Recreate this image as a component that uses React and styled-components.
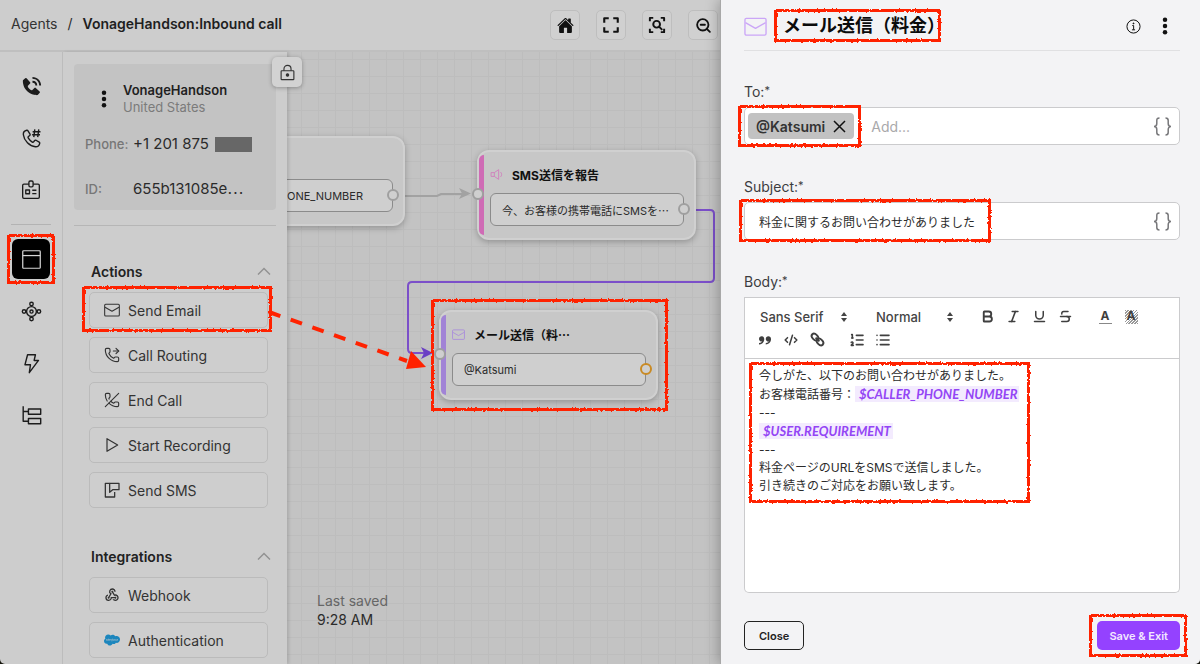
import React from "react";
import styled, { createGlobalStyle } from "styled-components";
import { Bold, CodeXml, Italic, List, ListOrdered, PhoneForwarded, PhoneOff, Strikethrough, Underline, ZoomOut } from "lucide-react";
import { BiSolidPhoneCall } from "react-icons/bi";
import { FaSalesforce } from "react-icons/fa";
import { ImQuotesRight } from "react-icons/im";
import { IoHome } from "react-icons/io5";
import { MdWebhook } from "react-icons/md";

const GlobalStyle = createGlobalStyle`
  * {
    box-sizing: border-box;
  }

  html {
    background: #15150c;
  }

  body {
    margin: 0;
    font-family: Inter, "Noto Sans CJK JP", sans-serif;
    font-size: 14px;
    color: #2b2b2b;
  }

  button, input, select {
    font: inherit;
    color: inherit;
  }
`;

// ----------------------------------------
// LAYOUT
// ----------------------------------------
const Page = styled.div`
  display: flex;
  height: 100vh;
  min-height: 560px;
  overflow: hidden;
  border-radius: 0 0 5px 5px;
  background: #cdcdcd;
`;

const Workspace = styled.div`
  position: relative;
  flex: 1;
  min-width: 0;
  display: flex;
  flex-direction: column;
`;

const TopBar = styled.header`
  display: flex;
  align-items: center;
  justify-content: space-between;
  height: 52px;
  flex-shrink: 0;
  padding: 0 2px 0 11px;
  border-bottom: 2px solid #bfbfbf;
`;

const Breadcrumb = styled.nav`
  display: flex;
  gap: 10px;
  padding-bottom: 4px;
  white-space: nowrap;

  a {
    color: #333;
    text-decoration: none;
  }

  strong {
    font-weight: 600;
    color: #1f1f1f;
  }
`;

const ToolGroup = styled.div`
  display: flex;
  gap: 16px;
`;

const ToolButton = styled.button`
  display: flex;
  align-items: center;
  justify-content: center;
  width: 30px;
  height: 30px;
  padding: 0;
  border: 1px solid #bebebe;
  border-radius: 5px;
  background: #d0d0d0;
  color: #111;
`;

const Main = styled.div`
  flex: 1;
  min-height: 0;
  display: flex;
`;

const Rail = styled.nav`
  display: flex;
  flex-direction: column;
  align-items: center;
  gap: 12px;
  width: 63px;
  flex-shrink: 0;
  padding-top: 14px;
  border-right: 1px solid #bdbdbd;
`;

const RailButton = styled.button`
  position: relative;
  display: flex;
  align-items: center;
  justify-content: center;
  width: 38px;
  height: 40px;
  padding: 0;
  border: 0;
  border-radius: 6px;
  background: ${({ $active }) => ($active ? "#000" : "transparent")};
  color: ${({ $active }) => ($active ? "#d6d6d6" : "#1c1c1c")};
`;

const RailDivider = styled.hr`
  width: 40px;
  margin: 2px 0;
  border: 0;
  border-top: 1px solid #b3b3b3;
`;

const SidePanel = styled.aside`
  position: relative;
  z-index: 2;
  width: 224px;
  flex-shrink: 0;
  padding: 12px 11px 0;
  background: #cdcdcd;
  box-shadow: 2px 0 3px rgba(0, 0, 0, 0.12);
`;

const LockButton = styled(ToolButton)`
  position: absolute;
  top: 5px;
  right: -15px;
  border: 0;
  background: #d2d2d2;
  box-shadow: 0 1px 4px rgba(0, 0, 0, 0.3);
  color: #333;
`;

// ----------------------------------------
// AGENT CARD
// ----------------------------------------
const AgentCard = styled.section`
  padding: 18px 11px 11px;
  border-radius: 4px;
  background: #c3c3c3;
`;

const AgentHead = styled.div`
  display: flex;
  align-items: center;
  gap: 16px;
  padding-left: 16px;
  margin-bottom: 18px;
  line-height: 17px;
`;

const AgentName = styled.div`
  font-size: 13px;
  font-weight: 600;
  color: #1f1f1f;
`;

const AgentCountry = styled.div`
  font-size: 13px;
  color: #7b7b7b;
`;

const MenuButton = styled.button`
  display: flex;
  padding: 0;
  border: 0;
  background: none;
  color: #111;
`;

const AgentFacts = styled.dl`
  display: grid;
  grid-template-columns: 44px 1fr;
  column-gap: 4px;
  row-gap: 25px;
  margin: 0;
  line-height: 20px;
  white-space: nowrap;

  dt {
    font-size: 13px;
    font-weight: 500;
    color: #777;
  }

  dd {
    display: flex;
    align-items: center;
    gap: 6px;
    margin: 0;
    font-size: 15px;
  }
`;

const Redacted = styled.span`
  width: 37px;
  height: 15px;
  background: #676767;
`;

const PanelDivider = styled.hr`
  margin: 15px 0 0;
  border: 0;
  border-top: 1px solid #b6b6b6;
`;

// ----------------------------------------
// ACTION LISTS
// ----------------------------------------
const Group = styled.section`
  padding: 0 8px 0 15px;
  margin-top: ${({ $gap }) => $gap}px;
`;

const GroupHeader = styled.div`
  display: flex;
  align-items: center;
  justify-content: space-between;
  height: 20px;
  margin: 0 -3px 11px 2px;

  h2 {
    margin: 0;
    font-size: 14px;
    font-weight: 600;
    color: #222;
  }
`;

const CollapseButton = styled(MenuButton)`
  color: #929292;
`;

const GroupItems = styled.div`
  display: flex;
  flex-direction: column;
  gap: 9px;
`;

const ActionButton = styled.button`
  position: relative;
  display: flex;
  align-items: center;
  gap: 8px;
  height: 36px;
  padding: 0 14px;
  border: 1px solid #bbb;
  border-radius: 5px;
  background: #cecece;
  color: #333;
  text-align: left;
`;

// ----------------------------------------
// CANVAS
// ----------------------------------------
const Canvas = styled.main`
  position: relative;
  flex: 1;
  min-width: 0;
  overflow: hidden;
  background-color: #c3c3c3;
  background-image: linear-gradient(#bdbdbd 1px, transparent 1px), linear-gradient(90deg, #bdbdbd 1px, transparent 1px);
  background-size: 17px 17px;
  background-position: 14px 7px;
`;

const Edges = styled.svg`
  position: absolute;
  inset: 0;
  overflow: visible;
`;

const Node = styled.article`
  position: absolute;
  left: ${({ $x }) => $x}px;
  top: ${({ $y }) => $y}px;
  display: flex;
  width: 219px;
  padding: 3px 0;
  border: 2px solid #d0d0d0;
  border-radius: 12px;
  background: #c7c7c7;
  box-shadow: 0 2px 6px rgba(0, 0, 0, 0.25);
`;

const NodeStripe = styled.div`
  width: 5px;
  border-radius: 8px 0 0 8px;
  background: ${({ $color }) => $color};
`;

const NodeContent = styled.div`
  flex: 1;
  min-width: 0;
  padding: 9px 10px 9px 6px;
`;

const NodeTitle = styled.h3`
  display: flex;
  align-items: center;
  gap: 9px;
  height: 20px;
  margin: 0 0 9px;
  font-size: 12px;
  font-weight: 700;
  color: #111;
  white-space: nowrap;
`;

const NodeField = styled.div`
  position: relative;
  display: flex;
  align-items: center;
  justify-content: ${({ $end }) => ($end ? "flex-end" : "flex-start")};
  height: 33px;
  padding: 0 ${({ $end }) => ($end ? 29 : 11)}px;
  border: 1px solid #8b8b8b;
  border-radius: 6px;
  background: #cfcfcf;
  font-size: 11px;
  white-space: nowrap;
`;

const Port = styled.span`
  position: absolute;
  ${({ $side }) => $side}: -7px;
  top: ${({ $side }) => ($side === "left" ? 36 : 9)}px;
  width: 12px;
  height: 12px;
  border: 2px solid ${({ $color }) => $color || "#9f9f9f"};
  border-radius: 50%;
  background: #cfcfcf;
`;

const NodeMark = styled.span`
  display: flex;
  color: ${({ $color }) => $color};
`;

const SaveStatus = styled.div`
  position: absolute;
  left: 30px;
  bottom: 35px;
  line-height: 19px;
  color: #666;

  time {
    display: block;
    color: #2b2b2b;
  }
`;

// ----------------------------------------
// ANNOTATIONS
// ----------------------------------------
const Highlight = styled.span`
  position: absolute;
  inset: ${({ $inset }) => $inset};
  border: 3px solid #ff2200;
  filter: url(#rough);
  pointer-events: none;
`;

const DragArrow = styled.svg`
  position: absolute;
  left: 268px;
  top: 305px;
  z-index: 3;
  pointer-events: none;
`;

const Defs = styled.svg`
  position: absolute;
  width: 0;
  height: 0;
`;

// ----------------------------------------
// DRAWER
// ----------------------------------------
const Drawer = styled.form`
  position: relative;
  z-index: 4;
  display: flex;
  flex-direction: column;
  flex: 0 0 40%;
  min-width: 440px;
  padding: 0 20px 0 23px;
  background: #f3f3f5;
  border-left: 1px solid #a8a8a8;
  box-shadow: -2px 0 12px rgba(0, 0, 0, 0.25);
`;

const DrawerHeader = styled.header`
  display: flex;
  align-items: center;
  height: 51px;
  flex-shrink: 0;
  gap: 16px;
  padding-top: 2px;
  margin-bottom: 31px;
  border-bottom: 1px solid #e0e0e2;
`;

const DrawerTitle = styled.h1`
  flex: 1;
  margin: 0;
  font-size: 18px;
  line-height: 26px;
  font-weight: 700;
  color: #0b0b0b;
`;

const TitleText = styled.span`
  position: relative;
  display: inline-block;
`;

const HeaderActions = styled.div`
  display: flex;
  align-items: center;
  gap: 21px;
  padding-right: 12px;
`;

const FieldBlock = styled.div`
  display: flex;
  flex-direction: column;
  gap: 5px;
  margin-bottom: 32px;
`;

const EditorBlock = styled(FieldBlock)`
  flex: 1;
  margin-bottom: 0;
`;

const FieldLabel = styled.label`
  height: 20px;
  line-height: 20px;
  color: #3c3c3f;

  &::after {
    content: "*";
    font-size: 11px;
    vertical-align: top;
    line-height: 16px;
  }
`;

const InputBox = styled.div`
  position: relative;
  display: flex;
  align-items: center;
  height: 38px;
  padding: 0 7px 0 3px;
  border: 1px solid #cbcbcd;
  border-radius: 5px;
  background: #fff;
`;

const TextInput = styled.input`
  flex: 1;
  min-width: 0;
  padding: 0 0 0 ${({ $small }) => ($small ? 11 : 17)}px;
  border: 0;
  outline: 0;
  background: transparent;
  font-size: ${({ $small }) => ($small ? 12 : 14)}px;

  &::placeholder {
    color: #a9a9ab;
  }
`;

const Chip = styled.span`
  position: relative;
  display: flex;
  align-items: center;
  gap: 8px;
  height: 26px;
  padding: 0 8px;
  border-radius: 4px;
  background: #c2c2c2;
  color: #333;
  font-weight: 600;
`;

const BracesButton = styled(MenuButton)`
  color: #77777a;
`;

const Toolbar = styled.div`
  display: flex;
  flex-wrap: wrap;
  column-gap: 14px;
  padding: 7px;
  border: 1px solid #cbcbcd;
  background: #fff;
  color: #444;
`;

const ToolbarGroup = styled.div`
  display: flex;
`;

const ToolbarButton = styled.button`
  display: flex;
  align-items: center;
  justify-content: center;
  width: 26px;
  height: 23px;
  padding: 0;
  border: 0;
  background: none;
  color: #3f3f3f;
`;

const ColorLetter = styled.span`
  width: 13px;
  height: 14px;
  line-height: 12px;
  border-bottom: ${({ $hatched }) => ($hatched ? "0" : "1px solid #888")};
  background: ${({ $hatched }) => ($hatched ? "repeating-linear-gradient(135deg, #999 0 1px, #fff 1px 2px)" : "none")};
  font-size: 12px;
  font-weight: 700;
`;

const SelectWrap = styled.span`
  position: relative;
  display: flex;
  align-items: center;
  width: ${({ $width }) => $width}px;
  height: 23px;

  svg {
    position: absolute;
    right: 7px;
    pointer-events: none;
  }
`;

const ToolbarSelect = styled.select`
  appearance: none;
  width: 100%;
  padding: 0 8px;
  border: 0;
  outline: 0;
  background: transparent;
  font-family: Inter, sans-serif;
  font-size: 13px;
  font-weight: 500;
`;

const EditorFrame = styled.div`
  flex: 1;
  display: flex;
  flex-direction: column;
  min-height: 180px;
`;

const Editor = styled.div`
  position: relative;
  flex: 1;
  padding: 8px 14px;
  border: 1px solid #cbcbcd;
  border-top: 0;
  border-radius: 0 0 5px 5px;
  background: #fff;
  font-size: 12px;
  line-height: 18px;

  p {
    margin: 0;
  }
`;

const EditorText = styled.div`
  outline: 0;
`;

const Variable = styled.em`
  padding: 0 2px 0 4px;
  background: #f3ebfe;
  color: #9345f5;
  font-family: Lato, "Open Sans", sans-serif;
  font-size: 13px;
  font-weight: 700;
`;

const DrawerFooter = styled.footer`
  display: flex;
  justify-content: space-between;
  padding: 28px 0 14px;
`;

const FooterButton = styled.button`
  position: relative;
  height: 29px;
  padding: 0 ${({ $primary }) => ($primary ? 12 : 14)}px;
  border: ${({ $primary }) => ($primary ? "0" : "1px solid #222")};
  border-radius: 5px;
  background: ${({ $primary }) => ($primary ? "#9442ff" : "transparent")};
  color: ${({ $primary }) => ($primary ? "#f3e8ff" : "#222")};
  font-size: 11px;
  font-weight: 600;
`;

// ----------------------------------------
// ICONS
// ----------------------------------------
const Icon = ({ size = 20, stroke = 1.6, children, ...rest }) => (
  <svg width={size} height={size} viewBox="0 0 24 24" fill="none" stroke="currentColor" strokeWidth={stroke} strokeLinejoin="round" aria-hidden="true" {...rest}>
    {children}
  </svg>
);

const PhoneHashIcon = () => (
  <Icon size={21}>
    <path d="M6.6 2.6C4 3.2 2.4 5 2.7 7.7c.7 6.6 7.2 13.1 13.7 13.700 2.700.2 4.400-1.300 5-3.900.1-.6-.1-1-.6-1.300l-3.700-2.200c-.6-.3-1.100-.2-1.500.3l-1.200 1.600c-.4.500-1 .5-1.500.2-2-1.300-3.500-2.800-4.700-4.800-.3-.5-.2-1.100.3-1.500l1.500-1.200c.5-.4.600-1 .3-1.500L8 3.200c-.3-.5-.8-.7-1.400-.6z" />
    <path d="M15.8 1.5l-1.2 9M20.3 1.5l-1.2 9M13.3 4.300h9M12.700 7.700h9" />
  </Icon>
);

const BadgeIcon = () => (
  <Icon size={20}>
    <path d="M9.5 5H3.5A1.5 1.5 0 0 0 2 6.5v14A1.5 1.5 0 0 0 3.5 22h17a1.5 1.5 0 0 0 1.5-1.5v-14A1.5 1.5 0 0 0 20.5 5h-6" />
    <rect x="9.5" y="1.2" width="5" height="7" rx="1.5" />
    <rect x="5.7" y="12" width="4.5" height="4.5" />
    <path d="M13.5 12.3h5M13.5 16.3h5" />
  </Icon>
);

const WindowIcon = () => (
  <Icon size={21} stroke={1.4}>
    <rect x="2" y="2" width="20" height="20" rx="1" />
    <path d="M2 7.5h20" />
  </Icon>
);

const FlowIcon = () => (
  <Icon size={21}>
    <circle cx="12" cy="12" r="5.6" />
    <circle cx="12" cy="12" r="1.8" />
    <circle cx="12" cy="3.5" r="2" />
    <circle cx="12" cy="20.5" r="2" />
    <circle cx="3.5" cy="12" r="2" />
    <circle cx="20.5" cy="12" r="2" />
  </Icon>
);

const BoltIcon = () => (
  <Icon size={21}>
    <path d="M7.5 2h9l-1.5 6.5h5L9.5 22.5l1.3-9H4.500z" />
  </Icon>
);

const TreeIcon = () => (
  <Icon size={21}>
    <path d="M2.5 1.5v17h6M2.5 7.5h6" />
    <rect x="8.5" y="4.5" width="14" height="6" />
    <rect x="8.5" y="15.5" width="14" height="6" />
  </Icon>
);

const MailIcon = ({ size = 18, stroke = 1.6 }) => (
  <Icon size={size} stroke={stroke}>
    <rect x="1" y="3.5" width="22" height="17.5" rx="1.5" />
    <path d="M1.5 8l10.5 6L22.5 8" />
  </Icon>
);

const PlayIcon = () => (
  <Icon size={16} stroke={1.8}>
    <path d="M4.5 2.5v19L20.5 12z" />
  </Icon>
);

const SmsIcon = () => (
  <Icon size={16} stroke={1.9}>
    <path d="M8.5 2H2v20.5h14V15" />
    <path d="M8.5 2H22.5v9.5H13l-4.5 4z" />
  </Icon>
);

const LockIcon = () => (
  <Icon size={17}>
    <rect x="3" y="9.5" width="18" height="12.5" rx="1" />
    <path d="M7 9.5V7a5 5 0 0 1 10 0v2.5" />
    <circle cx="12" cy="15.5" r="1.7" fill="currentColor" />
  </Icon>
);

const FullscreenIcon = () => (
  <Icon size={18} stroke={2.8}>
    <path d="M3 9V3h6M15 3h6v6M21 15v6h-6M9 21H3v-6" />
  </Icon>
);

const FocusIcon = () => (
  <Icon size={18} stroke={2.6}>
    <path d="M2.5 7V2.5H7M17 2.5h4.5V7M21.5 17v4.5H17M7 21.5H2.5V17" />
    <circle cx="11.5" cy="11" r="4.5" />
    <path d="M15 14.5l4 4" />
  </Icon>
);

const SpeakerIcon = () => (
  <Icon size={13} stroke={1.7}>
    <path d="M2 8.5h6l8-5.5v18l-8-5.5H2zM8 8.5v7M19.5 7.5c2.5 2 2.5 7 0 9" />
  </Icon>
);

const DotsIcon = () => (
  <svg width="6" height="18" viewBox="0 0 6 20" fill="currentColor" aria-hidden="true">
    <circle cx="3" cy="3" r="2.5" />
    <circle cx="3" cy="10" r="2.5" />
    <circle cx="3" cy="17" r="2.5" />
  </svg>
);

const InfoIcon = () => (
  <Icon size={15} stroke={1.6}>
    <circle cx="12" cy="12" r="10.5" />
    <path d="M10 10.5h2.2V17M9.500 17.300h5" />
    <circle cx="12" cy="7" r="0.8" fill="currentColor" />
  </Icon>
);

const BracesIcon = () => (
  <svg width="19" height="19" viewBox="0 0 19 19" fill="none" stroke="currentColor" strokeWidth="1.5" aria-hidden="true">
    <path d="M6.5 1C4 1 3.8 2 3.8 3.5v3c0 1.5-.8 3-2.8 3 2 0 2.8 1.5 2.8 3v3c0 1.5.2 2.5 2.7 2.5M12.5 1c2.5 0 2.7 1 2.7 2.5v3c0 1.5.8 3 2.8 3-2 0-2.8 1.5-2.8 3v3c0 1.5-.2 2.500-2.700 2.500" />
  </svg>
);

const CrossIcon = () => (
  <svg width="13" height="13" viewBox="0 0 13 13" stroke="currentColor" strokeWidth="1.5" aria-hidden="true">
    <path d="M1 1l11 11M12 1L1 12" />
  </svg>
);

const CaretUpIcon = () => (
  <svg width="14" height="8" viewBox="0 0 14 8" fill="none" stroke="currentColor" strokeWidth="1.5" aria-hidden="true">
    <path d="M1 7.5l6-6 6 6" />
  </svg>
);

const SortIcon = () => (
  <svg width="6" height="10" viewBox="0 0 6 10" fill="#444" aria-hidden="true">
    <path d="M3 0L6 4H0zM3 10L0 6h6z" />
  </svg>
);

const ChainIcon = () => (
  <svg width="17" height="17" viewBox="0 0 18 18" fill="none" stroke="currentColor" strokeWidth="2" aria-hidden="true">
    <path d="M7 7l4 4" />
    <ellipse cx="6.3" cy="6.3" rx="4" ry="2.8" transform="rotate(45 6.3 6.3)" />
    <ellipse cx="11.7" cy="11.7" rx="4" ry="2.8" transform="rotate(45 11.7 11.7)" />
  </svg>
);

// ----------------------------------------
// DATA
// ----------------------------------------
const railTop = [
  { label: "Calls", icon: <BiSolidPhoneCall size={23} /> },
  { label: "Numbers", icon: <PhoneHashIcon /> },
  { label: "Agent profile", icon: <BadgeIcon /> },
];

const railBottom = [
  { label: "Nodes", icon: <WindowIcon />, active: true },
  { label: "Flows", icon: <FlowIcon /> },
  { label: "Events", icon: <BoltIcon /> },
  { label: "Structure", icon: <TreeIcon /> },
];

const actions = [
  { label: "Send Email", icon: <MailIcon size={16} />, highlighted: true },
  { label: "Call Routing", icon: <PhoneForwarded size={16} strokeWidth={1.7} /> },
  { label: "End Call", icon: <PhoneOff size={16} strokeWidth={1.7} /> },
  { label: "Start Recording", icon: <PlayIcon /> },
  { label: "Send SMS", icon: <SmsIcon /> },
];

const integrations = [
  { label: "Webhook", icon: <MdWebhook size={16} /> },
  { label: "Authentication", icon: <FaSalesforce size={16} color="#1c86bd" /> },
];

const ActionGroup = ({ title, items, gap }) => (
  <Group $gap={gap}>
    <GroupHeader>
      <h2>{title}</h2>
      <CollapseButton type="button" aria-label={`Collapse ${title}`}>
        <CaretUpIcon />
      </CollapseButton>
    </GroupHeader>
    <GroupItems>
      {items.map((item) => (
        <ActionButton key={item.label} type="button">
          {item.icon}
          {item.label}
          {item.highlighted && <Highlight $inset="-7px -5px -5px -8px" />}
        </ActionButton>
      ))}
    </GroupItems>
  </Group>
);

const RailItem = ({ item }) => (
  <RailButton type="button" aria-label={item.label} $active={item.active}>
    {item.icon}
    {item.active && <Highlight $inset="-5px" />}
  </RailButton>
);

// ----------------------------------------
// MAIN COMPONENT
// ----------------------------------------
const App = () => (
  <>
    <GlobalStyle />
    <Defs aria-hidden="true">
      <filter id="rough" x="-5%" y="-10%" width="110%" height="120%">
        <feTurbulence type="fractalNoise" baseFrequency="0.4" numOctaves="2" seed="4" />
        <feDisplacementMap in="SourceGraphic" scale="3" />
      </filter>
    </Defs>
    <Page>
      <Workspace>
        <TopBar>
          <Breadcrumb aria-label="Breadcrumb">
            <a href="#agents">Agents</a>
            <span>/</span>
            <strong>VonageHandson:Inbound call</strong>
          </Breadcrumb>
          <ToolGroup>
            <ToolButton type="button" aria-label="Home"><IoHome size={17} /></ToolButton>
            <ToolButton type="button" aria-label="Full screen"><FullscreenIcon /></ToolButton>
            <ToolButton type="button" aria-label="Zoom to fit"><FocusIcon /></ToolButton>
            <ToolButton type="button" aria-label="Zoom out"><ZoomOut size={17} strokeWidth={2.6} /></ToolButton>
          </ToolGroup>
        </TopBar>

        <Main>
          <Rail aria-label="Sections">
            {railTop.map((item) => <RailItem key={item.label} item={item} />)}
            <RailDivider />
            {railBottom.map((item) => <RailItem key={item.label} item={item} />)}
          </Rail>

          <SidePanel>
            <AgentCard>
              <AgentHead>
                <MenuButton type="button" aria-label="Agent menu"><DotsIcon /></MenuButton>
                <div>
                  <AgentName>VonageHandson</AgentName>
                  <AgentCountry>United States</AgentCountry>
                </div>
              </AgentHead>
              <AgentFacts>
                <dt>Phone:</dt>
                <dd>+1 201 875 <Redacted /></dd>
                <dt>ID:</dt>
                <dd>655b131085e⋯</dd>
              </AgentFacts>
            </AgentCard>
            <PanelDivider />
            <ActionGroup title="Actions" items={actions} gap={35} />
            <ActionGroup title="Integrations" items={integrations} gap={38} />
            <LockButton type="button" aria-label="Lock panel"><LockIcon /></LockButton>
          </SidePanel>

          <Canvas>
            <Edges width="100%" height="100%" fill="none" aria-hidden="true">
              <path d="M118 144h32l4-2h22" stroke="#a2a2a2" strokeWidth="2" />
              <path d="M172 136l12 5.5-12 5.5 3-5.5z" fill="#a2a2a2" />
              <path d="M402 158h21q4 0 4 4v64q0 4-4 4H125q-4 0-4 4v63q0 4 4 4h14" stroke="#7b4fc9" strokeWidth="2" />
              <path d="M134 295l12 6-12 6 3-6z" fill="#6a3fc4" />
            </Edges>

            <Node $x={-101} $y={84}>
              <NodeStripe $color="#c96ab0" />
              <NodeContent>
                <NodeTitle />
                <NodeField $end>$CALLER_PHONE_NUMBER<Port $side="right" /></NodeField>
              </NodeContent>
            </Node>

            <Node $x={190} $y={98}>
              <NodeStripe $color="#cf6bb5" />
              <NodeContent>
                <NodeTitle><NodeMark $color="#d07fbd"><SpeakerIcon /></NodeMark>SMS送信を報告</NodeTitle>
                <NodeField>今、お客様の携帯電話にSMSを⋯<Port $side="right" /></NodeField>
              </NodeContent>
              <Port $side="left" />
            </Node>

            <Node $x={152} $y={258}>
              <NodeStripe $color="#a183d6" />
              <NodeContent>
                <NodeTitle><NodeMark $color="#a98bdc"><MailIcon size={13} /></NodeMark>メール送信（料⋯</NodeTitle>
                <NodeField>@Katsumi<Port $side="right" $color="#c98a24" /></NodeField>
              </NodeContent>
              <Port $side="left" />
              <Highlight $inset="-13px -12px -13px -10px" />
            </Node>

            <SaveStatus>
              Last saved
              <time>9:28 AM</time>
            </SaveStatus>
          </Canvas>
        </Main>

        <DragArrow width="160" height="68" viewBox="0 0 160 68" aria-hidden="true">
          <path d="M1 7l138 49" stroke="#ff2200" strokeWidth="4" strokeDasharray="12 11" />
          <path d="M143 46l15 16-20 2z" fill="#ff2200" />
        </DragArrow>
      </Workspace>

      <Drawer onSubmit={(e) => e.preventDefault()}>
        <DrawerHeader>
          <NodeMark $color="#cba6f7"><MailIcon size={23} stroke={1.4} /></NodeMark>
          <DrawerTitle>
            <TitleText>
              メール送信（料金）
              <Highlight $inset="-4px 4px -3px -9px" />
            </TitleText>
          </DrawerTitle>
          <HeaderActions>
            <MenuButton type="button" aria-label="Information"><InfoIcon /></MenuButton>
            <MenuButton type="button" aria-label="More options"><DotsIcon /></MenuButton>
          </HeaderActions>
        </DrawerHeader>

        <FieldBlock>
          <FieldLabel htmlFor="to">To:</FieldLabel>
          <InputBox>
            <Chip>
              @Katsumi
              <MenuButton type="button" aria-label="Remove @Katsumi"><CrossIcon /></MenuButton>
              <Highlight $inset="-8px -7px -8px -10px" />
            </Chip>
            <TextInput id="to" placeholder="Add..." />
            <BracesButton type="button" aria-label="Insert variable in To"><BracesIcon /></BracesButton>
          </InputBox>
        </FieldBlock>

        <FieldBlock>
          <FieldLabel htmlFor="subject">Subject:</FieldLabel>
          <InputBox>
            <TextInput id="subject" $small defaultValue="料金に関するお問い合わせがありました" />
            <BracesButton type="button" aria-label="Insert variable in Subject"><BracesIcon /></BracesButton>
            <Highlight $inset="-4px 188px -3px -6px" />
          </InputBox>
        </FieldBlock>

        <EditorBlock>
          <FieldLabel as="span" id="body-label">Body:</FieldLabel>
          <EditorFrame>
            <Toolbar>
              <SelectWrap $width={102}>
                <ToolbarSelect aria-label="Font" defaultValue="Sans Serif">
                  <option>Sans Serif</option>
                  <option>Serif</option>
                  <option>Monospace</option>
                </ToolbarSelect>
                <SortIcon />
              </SelectWrap>
              <SelectWrap $width={92}>
                <ToolbarSelect aria-label="Size" defaultValue="Normal">
                  <option>Small</option>
                  <option>Normal</option>
                  <option>Large</option>
                </ToolbarSelect>
                <SortIcon />
              </SelectWrap>
              <ToolbarGroup>
                <ToolbarButton type="button" aria-label="Bold"><Bold size={15} strokeWidth={3} /></ToolbarButton>
                <ToolbarButton type="button" aria-label="Italic"><Italic size={15} strokeWidth={2.6} /></ToolbarButton>
                <ToolbarButton type="button" aria-label="Underline"><Underline size={15} strokeWidth={2.4} /></ToolbarButton>
                <ToolbarButton type="button" aria-label="Strikethrough"><Strikethrough size={15} strokeWidth={2.4} /></ToolbarButton>
              </ToolbarGroup>
              <ToolbarGroup>
                <ToolbarButton type="button" aria-label="Text color"><ColorLetter>A</ColorLetter></ToolbarButton>
                <ToolbarButton type="button" aria-label="Background color"><ColorLetter $hatched>A</ColorLetter></ToolbarButton>
              </ToolbarGroup>
              <ToolbarGroup>
                <ToolbarButton type="button" aria-label="Quote"><ImQuotesRight size={12} /></ToolbarButton>
                <ToolbarButton type="button" aria-label="Code"><CodeXml size={14} strokeWidth={2.6} /></ToolbarButton>
                <ToolbarButton type="button" aria-label="Link"><ChainIcon /></ToolbarButton>
              </ToolbarGroup>
              <ToolbarGroup>
                <ToolbarButton type="button" aria-label="Numbered list"><ListOrdered size={16} strokeWidth={2.4} /></ToolbarButton>
                <ToolbarButton type="button" aria-label="Bulleted list"><List size={16} strokeWidth={2.4} /></ToolbarButton>
              </ToolbarGroup>
            </Toolbar>
            <Editor>
              <EditorText role="textbox" aria-multiline="true" aria-labelledby="body-label" contentEditable suppressContentEditableWarning>
                <p>今しがた、以下のお問い合わせがありました。</p>
                <p>お客様電話番号：<Variable>$CALLER_PHONE_NUMBER</Variable></p>
                <p>---</p>
                <p><Variable>$USER.REQUIREMENT</Variable></p>
                <p>---</p>
                <p>料金ページのURLをSMSで送信しました。</p>
                <p>引き続きのご対応をお願い致します。</p>
              </EditorText>
              <Highlight $inset="3px 149px 89px 4px" />
            </Editor>
          </EditorFrame>
        </EditorBlock>

        <DrawerFooter>
          <FooterButton type="button">Close</FooterButton>
          <FooterButton type="submit" $primary>
            Save &amp; Exit
            <Highlight $inset="-7px -7px -7px -8px" />
          </FooterButton>
        </DrawerFooter>
      </Drawer>
    </Page>
  </>
);

export default App;
